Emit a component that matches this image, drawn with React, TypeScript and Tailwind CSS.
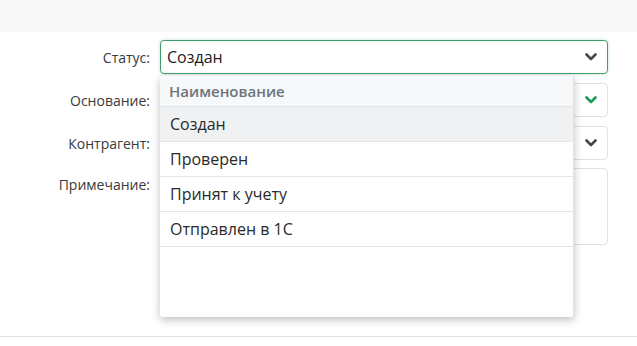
import React from "react";

const FONT = { fontFamily: '"Open Sans", "Noto Sans", sans-serif' };

function Chevron({ color = "#45474a" }: { color?: string }) {
	return (
		<svg width="12" height="8" viewBox="0 0 12 8" fill="none">
			<path d="M1.5 1.5 L6 6 L10.5 1.5" stroke={color} strokeWidth="2.6" strokeLinecap="round" strokeLinejoin="round" />
		</svg>
	);
}

const OPTIONS = ["Создан", "Проверен", "Принят к учету", "Отправлен в 1С"];

export default function App() {
	return (
		<div className="relative w-[637px] h-[346px] bg-white overflow-hidden text-[#333]" style={FONT}>
			<div className="h-[32px] bg-[#f8f8f8]" />
			<div className="pt-[8px] flex flex-col">
				<div className="flex items-center">
					<div className="w-[150px] text-right text-[14px] text-[#3a3a3a]">Статус:</div>
					<div className="ml-[10px] w-[448px] h-[34px] border border-[#3f9c6c] rounded-[4px] shadow-[0_0_3px_rgba(63,156,108,0.35)] flex items-center justify-between pl-[6px] pr-[10px]">
						<span className="text-[16px] text-[#222]">Создан</span>
						<Chevron />
					</div>
				</div>
				<div className="flex items-center mt-[9px]">
					<div className="w-[150px] text-right text-[14px] text-[#3a3a3a]">Основание:</div>
					<div className="ml-[10px] w-[448px] h-[34px] border border-[#e2e2e2] rounded-[4px] flex items-center justify-end pr-[10px]">
						<Chevron color="#1d9a52" />
					</div>
				</div>
				<div className="flex items-center mt-[9px]">
					<div className="w-[150px] text-right text-[14px] text-[#3a3a3a]">Контрагент:</div>
					<div className="ml-[10px] w-[448px] h-[34px] border border-[#e2e2e2] rounded-[4px] flex items-center justify-end pr-[10px]">
						<Chevron />
					</div>
				</div>
				<div className="flex items-start mt-[8px]">
					<div className="w-[150px] text-right text-[14px] text-[#3a3a3a] pt-[6px]">Примечание:</div>
					<div className="ml-[10px] w-[448px] h-[77px] border border-[#e2e2e2] rounded-[4px]" />
				</div>
			</div>
			<div className="absolute left-0 right-0 top-[336px] h-px bg-[#e3e3e3]" />

			<div className="absolute left-[160px] top-[76px] w-[414px] h-[241px] bg-white rounded-b-[3px] shadow-[0_3px_8px_rgba(0,0,0,0.25)] border-r border-[#e4e4e4]">
				<div className="h-[31px] bg-[#f7f8f9] border-b border-[#e3e4e6] flex items-center pl-[9px] text-[15px] font-semibold text-[#6c757d]">
					Наименование
				</div>
				{OPTIONS.map((o, i) => (
					<div
						key={o}
						className={`h-[35px] border-b border-[#e6e6e6] flex items-center pl-[10px] text-[16px] text-[#2a2a2a] ${i === 0 ? "bg-[#f0f1f2]" : "bg-white"}`}
					>
						{o}
					</div>
				))}
			</div>
		</div>
	);
}
